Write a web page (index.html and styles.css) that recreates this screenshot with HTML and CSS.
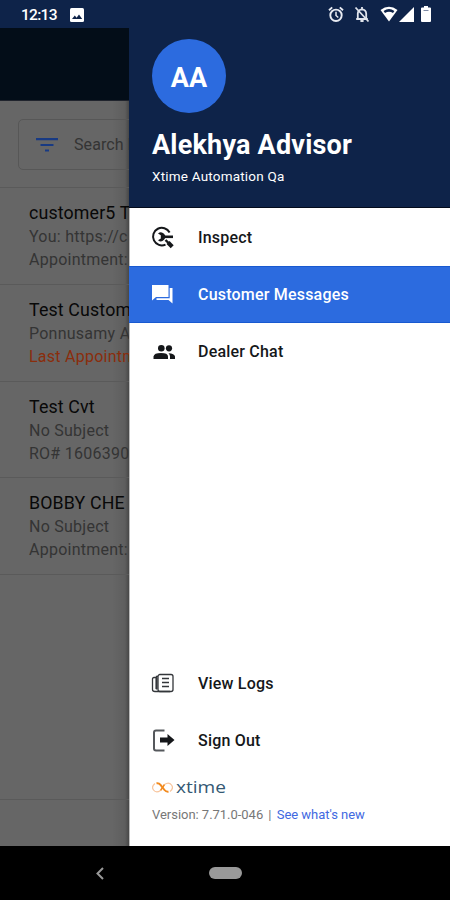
FILE: index.html
```html
<!DOCTYPE html>
<html lang="en">
  <head>
    <meta charset="UTF-8" />
    <meta name="viewport" content="width=device-width, initial-scale=1.0" />
    <title>Xtime</title>
    <link rel="stylesheet" href="styles.css">
  </head>
  <body>
    <div class="phone">
      <header class="status">
        <span class="clock">12:13</span>
        <svg class="picture" width="14" height="14" viewBox="0 0 14 14">
          <rect width="14" height="14" rx="1.5" fill="#fff" />
          <path d="M2 11l2.8-3.5 1.8 2.2L9 6.6l3.2 4.4z" fill="#0e2349" />
        </svg>
        <div class="status-icons">
          <svg width="16" height="17" viewBox="0 0 16 17" fill="none" stroke="#e8ebf2">
            <circle cx="8" cy="9.3" r="5.7" stroke-width="1.9" />
            <path d="M8 5.8v3.7l2.3 2" stroke-width="1.5" />
            <path d="M1 4.2L4.2 1.4M15 4.2L11.8 1.4" stroke-width="1.9" />
          </svg>
          <svg width="16" height="17" viewBox="0 0 16 17" fill="none" stroke="#e0e4ec" stroke-width="1.8">
            <path d="M3.8 13V7.6Q4 3.8 8 3.3q4 .5 4.2 4.3V13M2.2 13h11.6M8 1v2" />
            <path d="M1.5 1.5l13 14" />
            <path d="M6.4 15h3.2" stroke-width="2" />
          </svg>
          <svg class="wifi" width="18" height="16" viewBox="0 0 18 16">
            <path d="M.5 4Q9-2.5 17.5 4L9 15.5z" fill="#fff" />
            <path d="M3.6 5Q9 1.2 14.4 5L13 7Q9 4.6 5 7z" fill="#0e2349" />
          </svg>
          <svg class="signal" width="15" height="15" viewBox="0 0 15 15">
            <path d="M15 0v15H0z" fill="#fff" />
          </svg>
          <svg width="10" height="16" viewBox="0 0 10 16">
            <path d="M3 0h4v1.5h2q1 0 1 1V15q0 1-1 1H1q-1 0-1-1V2.5q0-1 1-1h2z" fill="#fff" />
            <path d="M2.5 4.5h5" stroke="#7f8ba5" />
          </svg>
        </div>
      </header>

      <div class="screen">
        <section class="inbox">
          <div class="toolbar"></div>
          <div class="search">
            <div class="search-box">
              <svg width="22" height="16" viewBox="0 0 22 16" stroke="#183a83" stroke-width="2.2">
                <path d="M0 2.2h22M4.5 8h13M9 13.5h4" />
              </svg>
              <span>Search by</span>
            </div>
          </div>
          <div class="thread">
            <div class="name">customer5 T</div>
            <div class="line">You: https://c</div>
            <div class="line">Appointment:</div>
          </div>
          <div class="thread">
            <div class="name">Test Custom</div>
            <div class="line">Ponnusamy A</div>
            <div class="line late">Last Appointm</div>
          </div>
          <div class="thread">
            <div class="name">Test Cvt</div>
            <div class="line">No Subject</div>
            <div class="line">RO# 1606390</div>
          </div>
          <div class="thread">
            <div class="name">BOBBY CHE</div>
            <div class="line">No Subject</div>
            <div class="line">Appointment:</div>
          </div>
          <div class="bottom-tabs"></div>
        </section>

        <aside class="drawer">
          <div class="profile">
            <div class="avatar">AA</div>
            <div class="user">Alekhya Advisor</div>
            <div class="dealer">Xtime Automation Qa</div>
          </div>

          <nav class="menu">
            <a class="item">
              <svg class="icon" width="24" height="24" viewBox="0 0 24 24" fill="none" stroke="#15171a">
                <path d="M18.6 6.4A8.8 8.8 0 1 0 14.5 18.6" stroke-width="2" />
                <path d="M22 10.8H12" stroke-width="2.6" />
                <path d="M7 7.4A4.4 4.4 0 1 1 7 14.2L9.8 12.4V9.2z" fill="#15171a" stroke="none" />
                <path d="M14.5 14l3 3" stroke-width="2.4" />
                <path d="M17 16.5l4.2 4.2" stroke-width="4.2" />
              </svg>
              <span>Inspect</span>
            </a>
            <a class="item active">
              <svg class="icon" width="24" height="24" viewBox="0 0 24 24" fill="#fff">
                <path d="M1 2h16.5v12H5l-4 3.5z" />
                <path d="M18.7 5H21.5v15.5l-4-3.500H5.500V15.300h13.200z" />
              </svg>
              <span>Customer Messages</span>
            </a>
            <a class="item">
              <svg class="icon" width="24" height="24" viewBox="0 0 24 24" fill="#15171a">
                <circle cx="10.3" cy="8.3" r="3.3" />
                <circle cx="18" cy="8.3" r="3.1" />
                <path d="M2.500 19v-2.500q.5-3.400 7.500-3.400t7 3.400V19z" />
                <path d="M17.500 13.200q6 .3 6.500 3.400V19h-5v-2.500q0-2-1.500-3.300z" />
              </svg>
              <span>Dealer Chat</span>
            </a>
          </nav>

          <div class="menu footer-menu">
            <a class="item">
              <svg class="icon" width="24" height="24" viewBox="0 0 24 24" fill="none" stroke="#33363a" stroke-width="1.3">
                <rect x="7" y="2.5" width="15" height="17" rx="2" />
                <path d="M7 4.5H5.5V17.5M5.5 5.5H3Q1.500 5.500 1.500 7v10.500q0 2 2.500 2h15" />
                <path d="M5.5 6v11" stroke-width="2" />
                <path d="M11 6.5h7M11 10.5h7M11 14.5h7" stroke-width="1.7" />
              </svg>
              <span>View Logs</span>
            </a>
            <a class="item">
              <svg class="icon" width="24" height="24" viewBox="0 0 24 24">
                <path d="M13.5 1.5H5Q3 1.500 3 3.500v16q0 2 2 2H13.500" fill="none" stroke="#55585c" stroke-width="2" />
                <path d="M9 8.500h7.500V5L23.500 11l-7 6V13.500H9z" fill="#15171a" />
              </svg>
              <span>Sign Out</span>
            </a>
          </div>

          <footer class="about">
            <div class="brand">
              <svg width="21" height="11" viewBox="0 0 21 11" fill="none">
                <path d="M8.5 8.5Q4 11.5 1.5 8T3 1.5M12.5 2.5Q17 -.5 19.5 3T18 9.5" stroke="#f8c59d" stroke-width="1.2" />
                <path d="M4.5 1.2Q7 .8 8.5 2.8l4 5.2Q14 10 16.5 9.7" stroke="#f28a1e" stroke-width="2" />
                <path d="M12.5 2.5l-4 6" stroke="#f28a1e" stroke-width="1.5" />
              </svg>
              <span>xtime</span>
            </div>
            <div class="version">Version: 7.71.0-046 <i>|</i> <a>See what's new</a></div>
          </footer>
        </aside>
      </div>

      <div class="system-nav">
        <svg class="back" width="8" height="13" viewBox="0 0 8 13" fill="none" stroke="#999" stroke-width="2">
          <path d="M7 1L1.5 6.5 7 12" />
        </svg>
        <div class="home"></div>
      </div>
    </div>
  </body>
</html>
```
FILE: styles.css
```css
* {
  box-sizing: border-box;
}
body {
  margin: 0;
  font-family: Roboto, "Liberation Sans", sans-serif;
}
.phone {
  display: flex;
  flex-direction: column;
  width: 450px;
  height: 900px;
  overflow: hidden;
  background: #000;
}
.status {
  display: flex;
  align-items: center;
  height: 28px;
  padding: 0 19px 0 21px;
  background: #0e2349;
  color: #fff;
}
.clock {
  width: 49px;
  padding-top: 2px;
  font-size: 15.5px;
  font-weight: 500;
  letter-spacing: -0.7px;
  line-height: 28px;
  white-space: nowrap;
}
.picture {
  margin-top: 1px;
}
.status-icons {
  display: flex;
  align-items: center;
  margin-left: auto;
  gap: 10px;
}
.signal {
  margin-left: -9px;
  margin-right: -3px;
}
.screen {
  display: flex;
  height: 818px;
}
.inbox {
  display: flex;
  flex-direction: column;
  width: 129px;
  background: linear-gradient(to right, transparent 112px, rgba(0, 0, 0, 0.08) 125px, rgba(0, 0, 0, 0.3)), #666;
  overflow: hidden;
  white-space: nowrap;
}
.toolbar {
  flex: none;
  height: 73px;
  background: #030d18;
  border-bottom: 1px solid #20242d;
}
.search {
  flex: none;
  height: 87px;
  padding: 18px 0 0 18px;
  border-bottom: 1px solid #5a5a5a;
}
.search-box {
  display: flex;
  align-items: center;
  gap: 16px;
  width: 300px;
  height: 51px;
  padding-left: 17px;
  border: 1px solid #575757;
  border-radius: 5px;
  color: #343434;
  font-size: 16px;
  letter-spacing: 0.1px;
}
.thread {
  flex: none;
  height: 96.8px;
  padding: 12px 0 0 29px;
  border-bottom: 1px solid #5a5a5a;
}
.name {
  color: #080808;
  font-size: 17.8px;
  line-height: 25px;
  letter-spacing: 0.15px;
}
.line {
  color: #343434;
  font-size: 16px;
  line-height: 23px;
  letter-spacing: 0.25px;
}
.late {
  color: #8a2d0c;
}
.bottom-tabs {
  height: 47px;
  margin-top: auto;
  border-top: 1px solid #5a5a5a;
}
.drawer {
  display: flex;
  flex-direction: column;
  width: 321px;
  background: #fff;
  border-left: 1px solid #bbb;
}
.profile {
  height: 180px;
  margin-left: -1px;
  padding: 11px 0 0 23px;
  background: #0e2349;
  border-bottom: 1px solid #030b1c;
  color: #fff;
}
.avatar {
  width: 74px;
  height: 74px;
  border-radius: 50%;
  background: #2c6bdf;
  font-size: 27px;
  font-weight: 700;
  line-height: 78px;
  text-align: center;
}
.user {
  margin-top: 15px;
  font-size: 27px;
  font-weight: 700;
  letter-spacing: 0.2px;
  line-height: 34px;
}
.dealer {
  margin-top: 5px;
  font-size: 13.5px;
  letter-spacing: 0.2px;
  line-height: 18px;
}
.item {
  display: flex;
  align-items: center;
  height: 57px;
  padding-left: 21px;
  color: #15171a;
  font-size: 16px;
  font-weight: 500;
  letter-spacing: 0.2px;
}
.icon {
  margin-right: 23px;
}
.menu {
  padding-top: 1px;
}
.active {
  margin-left: -1px;
  padding-left: 22px;
  background: #2c6bdf;
  border-top: 1px solid #1859d0;
  border-bottom: 1px solid #1859d0;
  color: #fff;
}
.footer-menu {
  margin-top: auto;
  padding-top: 0;
}
.about {
  height: 77px;
  padding: 10px 0 0 22px;
}
.brand {
  display: flex;
  align-items: center;
  height: 16px;
  gap: 3px;
  color: #345873;
  font-family: "Open Sans", sans-serif;
  font-size: 15.5px;
}
.brand span {
  line-height: 16px;
  transform: scaleX(1.23);
  transform-origin: left;
}
.version {
  margin-top: 11px;
  color: #777;
  font-size: 13px;
  letter-spacing: -0.03px;
  line-height: 18px;
}
.version i {
  margin: 0 2px;
  font-style: normal;
}
.version a {
  color: #4169e1;
}
.system-nav {
  display: flex;
  align-items: center;
  height: 54px;
  padding-left: 96px;
}
.home {
  width: 33px;
  height: 12px;
  margin-left: 105px;
  border-radius: 6px;
  background: #999;
}
```
